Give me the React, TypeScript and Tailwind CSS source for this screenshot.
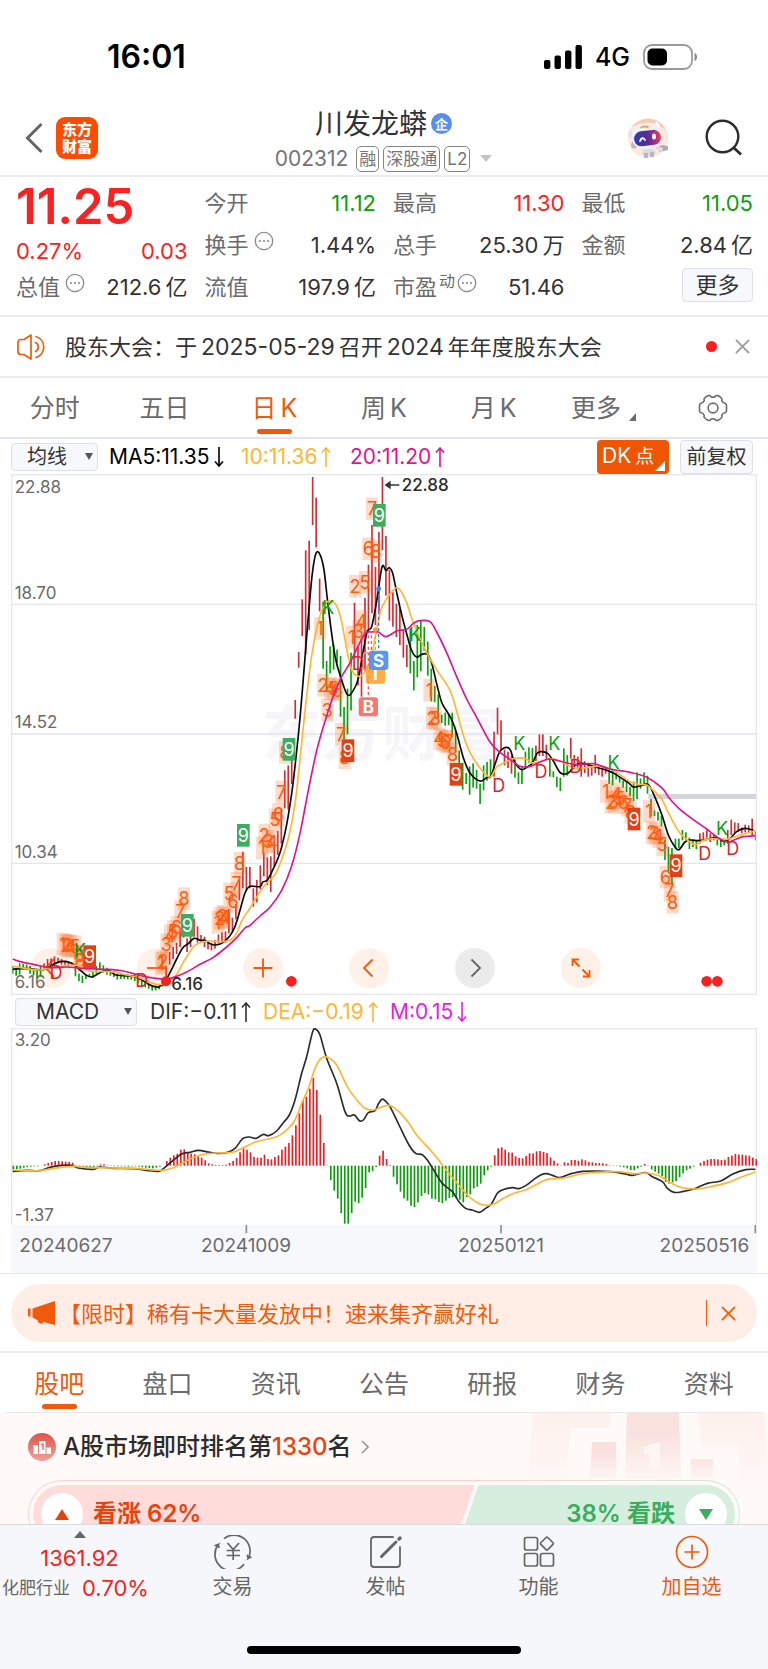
import React from "react";

type Point = [number, number];
type Range = [number, number];

const UP = "#cf3036";
const DOWN = "#0c9f0c";

/* Price rows are recorded on a 0..1524 scale and stretched to the plot height */
const rowY = (y: number) => Math.round(y * 1.0332);

const RUNS: { color: string; bars: Range[] }[] = [
  { color: DOWN, bars: [[1440, 1462], [1445, 1468], [1432, 1465], [1434, 1450], [1436, 1450], [1440, 1462], [1448, 1466], [1448, 1476], [1440, 1470]] },
  { color: UP, bars: [[1432, 1450], [1420, 1445], [1418, 1440], [1412, 1436], [1416, 1432], [1420, 1436], [1425, 1440], [1428, 1442], [1430, 1440]] },
  { color: DOWN, bars: [[1440, 1470], [1462, 1484], [1468, 1490], [1465, 1478], [1462, 1472], [1455, 1475], [1440, 1462], [1430, 1452], [1438, 1460], [1445, 1465], [1450, 1468], [1455, 1472], [1462, 1480], [1462, 1478], [1463, 1478], [1463, 1479], [1465, 1480], [1466, 1484], [1470, 1490], [1480, 1500], [1485, 1502], [1492, 1506], [1495, 1512], [1496, 1511], [1492, 1508], [1480, 1500]] },
  { color: UP, bars: [[1440, 1478], [1400, 1436], [1385, 1420], [1372, 1405], [1340, 1385], [1310, 1358], [1360, 1400], [1340, 1385], [1303, 1355], [1325, 1372], [1350, 1370], [1355, 1385], [1368, 1392], [1372, 1395], [1365, 1390], [1348, 1375], [1342, 1370], [1340, 1372], [1275, 1345], [1300, 1340], [1260, 1305], [1190, 1250], [1108, 1215], [1153, 1220], [1153, 1215], [1215, 1268], [1190, 1255], [1148, 1218], [1110, 1180], [1125, 1205], [1122, 1225], [1080, 1150], [1048, 1118], [985, 1085], [872, 982], [858, 985], [840, 912], [668, 722], [528, 574], [376, 482], [233, 535], [205, 465], [20, 160], [80, 225], [316, 410]] },
  { color: DOWN, bars: [[382, 577], [555, 645], [512, 590], [505, 580], [522, 560], [540, 716], [688, 782], [635, 768], [530, 698]] },
  { color: UP, bars: [[385, 545], [513, 625], [488, 658], [372, 585], [275, 470], [160, 415], [282, 450], [180, 410], [20, 232], [192, 365], [290, 437], [355, 455], [388, 485], [402, 508], [465, 545], [508, 572]] },
  { color: DOWN, bars: [[460, 590], [555, 640], [450, 602], [438, 585], [456, 525], [498, 597], [577, 672], [627, 675], [652, 720], [710, 735], [705, 742], [708, 740], [705, 775], [758, 820], [815, 880], [850, 928], [880, 912], [860, 943], [852, 922], [871, 925], [911, 970], [858, 930], [848, 902], [840, 890]] },
  { color: UP, bars: [[760, 890], [690, 768], [727, 812], [812, 858], [818, 865], [830, 882]] },
  { color: DOWN, bars: [[840, 893], [878, 912], [860, 912], [818, 865], [805, 850], [807, 850]] },
  { color: UP, bars: [[800, 845], [768, 830], [768, 830], [798, 840]] },
  { color: DOWN, bars: [[835, 890], [875, 892], [890, 920], [893, 932], [808, 890], [828, 888]] },
  { color: UP, bars: [[778, 838], [828, 868], [832, 870], [808, 890], [846, 880], [850, 890], [858, 888], [828, 880], [862, 886], [865, 890], [865, 882]] },
  { color: DOWN, bars: [[870, 912], [872, 916], [880, 898], [890, 908], [902, 922], [905, 935], [920, 948], [905, 962], [878, 955], [895, 925], [878, 918], [888, 940], [955, 1005], [988, 1005], [993, 1018], [1005, 1035], [1072, 1132], [1095, 1165], [1098, 1200], [1070, 1100], [1070, 1098], [1045, 1075], [1052, 1075], [1068, 1100], [1072, 1095], [1075, 1100]] },
  { color: UP, bars: [[1055, 1085], [1052, 1072], [1046, 1068], [1055, 1080], [1060, 1075]] },
  { color: DOWN, bars: [[1068, 1090], [1075, 1095], [1070, 1090]] },
  { color: UP, bars: [[1045, 1085], [1015, 1060], [1023, 1055], [1025, 1050], [1038, 1055], [1030, 1052], [1032, 1052], [1012, 1060], [1050, 1075]] },
];

const CANDLES = RUNS.flatMap((run) => run.bars.map(([top, bottom]) => ({ top: rowY(top), bottom: rowY(bottom), color: run.color })));
const CANDLE_STEP = 2229 / (CANDLES.length - 1);

const MA5: Point[] = [[38, 1450], [60, 1448], [90, 1448], [120, 1452], [140, 1448], [160, 1435], [180, 1428], [200, 1428], [222, 1436], [240, 1452], [258, 1466], [275, 1472], [295, 1462], [320, 1452], [345, 1465], [370, 1468], [400, 1470], [425, 1480], [445, 1492], [463, 1500], [478, 1500], [495, 1485], [510, 1460], [530, 1420], [548, 1388], [565, 1375], [582, 1360], [600, 1366], [615, 1366], [630, 1375], [645, 1379], [665, 1374], [690, 1352], [705, 1325], [718, 1285], [735, 1228], [750, 1209], [780, 1210], [788, 1196], [802, 1190], [820, 1158], [835, 1125], [845, 1095], [860, 1030], [875, 940], [885, 860], [900, 720], [915, 545], [925, 425], [937, 300], [948, 242], [960, 246], [972, 290], [985, 400], [1005, 540], [1025, 610], [1043, 653], [1060, 640], [1075, 605], [1090, 525], [1102, 468], [1115, 455], [1130, 380], [1146, 282], [1158, 292], [1168, 284], [1178, 300], [1190, 355], [1205, 420], [1220, 475], [1235, 525], [1250, 543], [1265, 535], [1283, 535], [1295, 560], [1310, 620], [1325, 675], [1340, 700], [1355, 725], [1370, 765], [1390, 835], [1410, 880], [1440, 903], [1462, 892], [1472, 890], [1485, 855], [1498, 820], [1510, 808], [1524, 806], [1532, 815], [1545, 850], [1565, 870], [1585, 860], [1598, 850], [1612, 822], [1628, 818], [1645, 825], [1660, 845], [1682, 880], [1705, 880], [1725, 858], [1750, 852], [1785, 862], [1815, 870], [1840, 880], [1865, 895], [1885, 908], [1900, 920], [1920, 918], [1945, 914], [1965, 950], [1985, 1000], [2005, 1060], [2025, 1095], [2037, 1102], [2055, 1080], [2070, 1074], [2100, 1076], [2130, 1070], [2150, 1068], [2172, 1078], [2190, 1070], [2210, 1050], [2235, 1040], [2260, 1046]];
const MA10: Point[] = [[38, 1440], [80, 1448], [120, 1452], [150, 1445], [200, 1438], [240, 1440], [270, 1456], [300, 1456], [340, 1458], [380, 1466], [420, 1475], [450, 1488], [475, 1494], [498, 1490], [525, 1472], [550, 1430], [580, 1385], [600, 1372], [630, 1368], [665, 1370], [690, 1365], [710, 1345], [725, 1310], [750, 1272], [770, 1240], [795, 1205], [825, 1175], [845, 1130], [865, 1070], [885, 970], [900, 840], [915, 700], [935, 540], [955, 440], [975, 390], [993, 380], [1010, 395], [1025, 440], [1040, 520], [1055, 580], [1072, 598], [1090, 592], [1110, 555], [1125, 490], [1140, 415], [1150, 390], [1170, 360], [1188, 343], [1202, 350], [1220, 385], [1235, 430], [1260, 490], [1280, 530], [1310, 580], [1350, 640], [1370, 700], [1390, 770], [1410, 820], [1440, 865], [1465, 890], [1475, 888], [1490, 862], [1510, 852], [1540, 838], [1575, 837], [1595, 850], [1620, 848], [1650, 838], [1680, 845], [1710, 860], [1740, 866], [1770, 862], [1800, 860], [1830, 868], [1860, 885], [1890, 905], [1915, 913], [1940, 915], [1960, 930], [1985, 955], [2005, 995], [2030, 1040], [2050, 1065], [2085, 1088], [2110, 1075], [2140, 1070], [2180, 1072], [2220, 1060], [2268, 1047]];
const MA20: Point[] = [[38, 1420], [60, 1428], [100, 1435], [150, 1445], [200, 1443], [250, 1447], [320, 1450], [370, 1455], [420, 1467], [460, 1475], [498, 1478], [530, 1470], [560, 1458], [600, 1435], [640, 1415], [680, 1385], [710, 1358], [735, 1330], [750, 1322], [780, 1295], [810, 1270], [845, 1220], [875, 1150], [900, 1055], [925, 930], [950, 815], [975, 730], [1000, 655], [1025, 600], [1050, 560], [1070, 520], [1095, 475], [1115, 470], [1135, 470], [1158, 484], [1190, 467], [1220, 463], [1240, 445], [1260, 437], [1290, 440], [1310, 470], [1340, 530], [1370, 600], [1400, 665], [1430, 718], [1470, 790], [1500, 820], [1530, 840], [1560, 860], [1590, 860], [1620, 848], [1650, 839], [1690, 848], [1730, 856], [1780, 853], [1830, 868], [1890, 878], [1940, 892], [1985, 922], [2010, 955], [2040, 985], [2080, 1015], [2120, 1042], [2150, 1065], [2180, 1080], [2200, 1075], [2230, 1065], [2268, 1062]];

type Mark = [string, number, number];

const COUNTS: Mark[] = [
  ["1", 188, 1376], ["2", 197, 1380], ["3", 204, 1380], ["4", 213, 1382], ["5", 225, 1384], ["6", 237, 1410], ["8", 240, 1424],
  ["1", 483, 1432], ["2", 488, 1428], ["3", 499, 1378], ["4", 510, 1352], ["5", 519, 1340], ["6", 530, 1328], ["7", 541, 1282], ["8", 552, 1245],
  ["1", 653, 1312], ["2", 659, 1302], ["3", 667, 1296], ["4", 675, 1300], ["5", 688, 1230], ["6", 699, 1252], ["7", 710, 1200], ["8", 719, 1142],
  ["1", 786, 1097], ["2", 793, 1060], ["3", 805, 1078], ["4", 816, 1080], ["5", 825, 1015], ["6", 835, 1000], ["7", 844, 935], ["8", 855, 820],
  ["1", 960, 460], ["2", 969, 625], ["3", 982, 697], ["4", 990, 635], ["5", 1000, 635], ["6", 1012, 640], ["7", 1023, 768], ["8", 1034, 835],
  ["1", 1055, 485], ["2", 1065, 338], ["3", 1075, 468], ["4", 1085, 440], ["5", 1095, 326], ["6", 1105, 228], ["7", 1116, 112], ["8", 1128, 236],
  ["1", 1288, 640], ["2", 1296, 720], ["3", 1306, 722], ["4", 1318, 780], ["5", 1327, 785], ["6", 1336, 790], ["7", 1346, 788], ["8", 1358, 825],
  ["1", 1818, 933], ["2", 1832, 965], ["3", 1841, 962], ["4", 1850, 942], ["5", 1860, 952], ["6", 1870, 966], ["7", 1882, 974], ["8", 1892, 995],
  ["1", 1947, 990], ["2", 1955, 1053], ["3", 1964, 1055], ["4", 1975, 1065], ["5", 1987, 1088], ["6", 1997, 1182], ["7", 2009, 1220], ["8", 2018, 1255],
];
const GREEN_NINES: Point[] = [[562, 1322], [730, 1061], [867, 811], [1138, 132]];
const RED_NINES: Point[] = [[269, 1413], [1044, 815], [1368, 884], [1902, 1013], [2028, 1149]];
const LETTERS: Mark[] = [
  ["K", 240, 1395], ["D", 168, 1458], ["D", 425, 1482], ["K", 985, 400], ["D", 1075, 560], ["K", 1245, 478], ["D", 1496, 917],
  ["K", 1558, 795], ["K", 1663, 795], ["K", 1841, 850], ["D", 1623, 875], ["D", 1728, 860], ["K", 2166, 1040], ["D", 2114, 1112], ["D", 2198, 1098],
];

/* MACD units: three per pixel, zero line at y 497 */
const HISTOGRAM = [-11, -10, -9, -6, -4, -3, -2, -2, 0, 4, 8, 11, 14, 14, 13, 12, 11, 9, -2, -4, -4, -5, -4, -4, -2, 4, 4, 1, -1, -2, -2, -2, -2, -3, -2, -2, -3, -5, -6, -7, -8, -6, -3, 0, 14, 24, 31, 36, 48, 49, 40, 36, 34, 28, 24, 16, 7, 4, 2, 2, 2, 3, 8, 14, 23, 40, 52, 48, 40, 26, 24, 24, 33, 20, 19, 26, 31, 48, 57, 68, 91, 121, 157, 197, 207, 231, 263, 227, 153, 68, -1, -43, -75, -99, -142, -174, -174, -142, -108, -112, -96, -67, -20, -16, -4, 30, 45, 20, 2, -33, -56, -78, -98, -105, -120, -124, -110, -91, -82, -86, -99, -101, -109, -112, -105, -97, -94, -98, -102, -110, -94, -86, -68, -63, -54, -29, -14, -3, 31, 52, 55, 48, 40, 39, 28, 23, 22, 29, 37, 37, 43, 44, 41, 38, 25, 15, 7, 1, 10, 8, 17, 17, 15, 19, 16, 11, 10, 8, 8, 7, 5, 1, -1, -1, -3, -5, -8, -13, -13, -8, -3, 5, -1, -11, -18, -24, -31, -49, -54, -50, -46, -35, -23, -14, -9, -3, 0, 9, 14, 18, 20, 20, 19, 17, 18, 26, 30, 35, 33, 33, 31, 30, 24, 20];
const HISTOGRAM_STEP = 2229 / (HISTOGRAM.length - 1);

const DIF: Point[] = [[38, 514], [80, 511], [120, 512], [150, 502], [185, 496], [215, 496], [235, 504], [280, 508], [300, 501], [340, 505], [400, 506], [440, 511], [475, 514], [490, 506], [515, 485], [545, 462], [570, 457], [595, 451], [625, 456], [650, 460], [680, 458], [705, 445], [728, 416], [748, 411], [768, 415], [790, 403], [806, 407], [830, 393], [850, 368], [868, 345], [885, 300], [905, 220], [920, 170], [938, 95], [948, 88], [960, 105], [980, 175], [1010, 250], [1035, 335], [1047, 348], [1063, 345], [1078, 362], [1090, 360], [1105, 338], [1125, 332], [1135, 312], [1146, 298], [1155, 302], [1170, 320], [1197, 375], [1227, 435], [1247, 460], [1267, 464], [1282, 480], [1302, 512], [1327, 550], [1357, 575], [1377, 605], [1397, 625], [1417, 630], [1439, 637], [1457, 625], [1474, 612], [1492, 580], [1507, 570], [1537, 563], [1557, 566], [1577, 557], [1602, 538], [1622, 525], [1639, 521], [1657, 526], [1677, 533], [1697, 527], [1717, 520], [1747, 514], [1792, 513], [1832, 515], [1872, 521], [1897, 526], [1937, 518], [1957, 530], [1987, 545], [2002, 565], [2022, 577], [2047, 575], [2082, 567], [2122, 550], [2162, 543], [2197, 523], [2237, 509], [2266, 508]];
const DEA: Point[] = [[38, 510], [120, 512], [160, 505], [220, 499], [260, 502], [330, 504], [400, 505], [450, 509], [490, 511], [520, 503], [545, 490], [575, 475], [610, 463], [650, 459], [700, 456], [735, 440], [770, 425], [830, 410], [860, 390], [885, 360], [905, 310], [925, 265], [945, 205], [960, 178], [975, 170], [990, 176], [1010, 195], [1045, 265], [1075, 305], [1095, 325], [1120, 330], [1150, 319], [1172, 317], [1197, 335], [1227, 370], [1252, 408], [1282, 440], [1312, 475], [1342, 515], [1372, 550], [1402, 585], [1432, 608], [1457, 616], [1482, 612], [1512, 594], [1542, 580], [1582, 568], [1612, 552], [1642, 538], [1692, 534], [1742, 522], [1792, 517], [1852, 515], [1902, 521], [1942, 519], [1977, 527], [2012, 548], [2042, 562], [2092, 567], [2132, 560], [2182, 548], [2222, 532], [2266, 516]];

/* Catmull-Rom curve through the points, as cubic segments */
function curve(points: Point[]): string {
  let d = `M${points[0][0]} ${points[0][1]}`;
  for (let i = 0; i < points.length - 1; i++) {
    const p0 = points[i - 1] ?? points[i];
    const p1 = points[i];
    const p2 = points[i + 1];
    const p3 = points[i + 2] ?? p2;
    const c1 = [p1[0] + (p2[0] - p0[0]) / 6, p1[1] + (p2[1] - p0[1]) / 6];
    const c2 = [p2[0] - (p3[0] - p1[0]) / 6, p2[1] - (p3[1] - p1[1]) / 6];
    d += `C${c1[0].toFixed(1)} ${c1[1].toFixed(1)} ${c2[0].toFixed(1)} ${c2[1].toFixed(1)} ${p2[0]} ${p2[1]}`;
  }
  return d;
}

const priceCurve = (points: Point[]) => curve(points.map(([x, y]): Point => [x, rowY(y)]));

/* Price labels with their baselines */
const PRICES: [string, number][] = [["22.88", 69], ["18.70", 386], ["14.52", 775], ["10.34", 1165], ["6.16", 1555]];

function PriceChart() {
  return (
    <svg viewBox="33 12 2238 1563" className="pointer-events-none relative block h-auto w-full" role="img" aria-label="日K走势图">
      <text x="1145" y="858" textAnchor="middle" fontSize="180" fontWeight="700" fill="#f6f6f8">东方财富</text>
      <path d="M33 403H2271M33 792H2271M33 1180H2271" stroke="#e3e5ec" strokeWidth="4" />
      <rect x="1945" y="972" width="326" height="15" fill="#d2d5da" />
      <g fill="#6b6b6b" fontSize="51">
        {PRICES.map(([text, y]) => <text key={text} x="44" y={y}>{text}</text>)}
      </g>
      {CANDLES.map((bar, i) => (
        <rect key={i} x={35.5 + i * CANDLE_STEP} y={bar.top} width="5" height={bar.bottom - bar.top} fill={bar.color} />
      ))}
      {COUNTS.map(([text, x, y], i) => (
        <g key={i}>
          <rect x={x - 18} y={rowY(y) - 34} width="36" height="68" fill="#ff6a26" fillOpacity="0.24" />
          <text x={x} y={rowY(y) + 20} textAnchor="middle" fontSize="54" fill="#ff5a0a">{text}</text>
        </g>
      ))}
      <g fill="none" strokeWidth="5" strokeLinejoin="round">
        <path d={priceCurve(MA5)} stroke="#0a0a0a" />
        <path d={priceCurve(MA10)} stroke="#ffb733" />
        <path d={priceCurve(MA20)} stroke="#e0148c" />
      </g>
      {LETTERS.map(([text, x, y], i) => (
        <text key={i} x={x} y={rowY(y) + 20} textAnchor="middle" fontSize="54" fill={text === "K" ? DOWN : "#d9262c"}>{text}</text>
      ))}
      {GREEN_NINES.map(([x, y]) => (
        <g key={x}>
          <rect x={x - 19} y={rowY(y) - 34} width="38" height="68" fill="#3aad5f" />
          <text x={x} y={rowY(y) + 20} textAnchor="middle" fontSize="54" fill="#fff">9</text>
        </g>
      ))}
      {RED_NINES.map(([x, y]) => (
        <g key={x}>
          <rect x={x - 19} y={rowY(y) - 34} width="38" height="68" fill="#e54014" />
          <text x={x} y={rowY(y) + 20} textAnchor="middle" fontSize="54" fill="#fff">9</text>
        </g>
      ))}
      <g strokeWidth="4" strokeDasharray="9 8" fill="none">
        <path d="M1136 356V542" stroke="#2f7df6" />
        <path d="M1126 480V584" stroke="#ff9a1f" />
        <path d="M1105 496V682" stroke="#f4565a" />
        <path d="M1114 496V542" stroke="#f4565a" />
      </g>
      <circle cx="1136" cy="356" r="7" fill="#2f7df6" />
      <circle cx="1126" cy="479" r="7" fill="#ff9a1f" />
      <rect x="1090" y="548" width="40" height="54" rx="8" fill="none" stroke="#f79a96" strokeWidth="4" />
      <g fontSize="51" fontWeight="700" fill="#fff" textAnchor="middle">
        <rect x="1097" y="584" width="58" height="57" rx="9" fill="#ffa233" fillOpacity="0.9" />
        <text x="1126" y="631">T</text>
        <rect x="1107" y="542" width="58" height="58" rx="9" fill="#5090f6" fillOpacity="0.95" />
        <text x="1136" y="590">S</text>
        <rect x="1076" y="682" width="58" height="57" rx="9" fill="#fa6f66" fillOpacity="0.95" />
        <text x="1105" y="730">B</text>
      </g>
      <path d="M1156 45h42M1170 36l-13 9 13 9z" stroke="#333" strokeWidth="4" fill="#333" />
      <g fill="#2c2c2c" fontSize="51" fontWeight="500">
        <text x="1205" y="64">22.88</text>
        <text x="514" y="1560">6.16</text>
      </g>
      <g fill="#f81f1f">
        <circle cx="498" cy="1534" r="15" />
        <circle cx="874" cy="1534" r="16" />
        <circle cx="2120" cy="1534" r="16" />
        <circle cx="2152" cy="1534" r="16" />
      </g>
      <rect x="35" y="14" width="2234" height="1559" fill="none" stroke="#e6e7eb" strokeWidth="4" />
    </svg>
  );
}

function MacdChart() {
  return (
    <svg viewBox="33 84 2238 735" className="block h-auto w-full" role="img" aria-label="MACD指标图">
      <rect x="33" y="675" width="2238" height="144" fill="#f7f8fb" />
      <path d="M35 675V86H2269V675" fill="none" stroke="#e6e7eb" strokeWidth="4" />
      <g fill="#6b6b6b" fontSize="51">
        <text x="44" y="137">3.20</text>
        <text x="44" y="662">-1.37</text>
      </g>
      {HISTOGRAM.map((v, i) => (
        <rect key={i} x={37.5 + i * HISTOGRAM_STEP} y={v > 0 ? 497 - v : 497} width="5" height={Math.abs(v)} fill={v > 0 ? "#f01c22" : "#0a9c0a"} />
      ))}
      <path d={curve(DIF)} fill="none" stroke="#2b2b2b" strokeWidth="5" />
      <path d={curve(DEA)} fill="none" stroke="#ffb733" strokeWidth="5" />
      <path d="M739 675v25M1503 675v25M2266 675v25" stroke="#8d8d92" strokeWidth="5" />
      <g fill="#6b6b6b" fontSize="57">
        <text x="58" y="757">20240627</text>
        <text x="738" y="757" textAnchor="middle">20241009</text>
        <text x="1503" y="757" textAnchor="middle">20250121</text>
        <text x="2248" y="757" textAnchor="end">20250516</text>
      </g>
    </svg>
  );
}

function MoreDots() {
  return (
    <svg viewBox="0 0 20 20" className="h-5 w-5 flex-none text-[#8c8c8c]" fill="none" stroke="currentColor" aria-hidden="true">
      <circle cx="10" cy="10" r="8.7" strokeWidth="1.3" />
      <g fill="currentColor" stroke="none">
        <circle cx="6" cy="10" r="1.1" />
        <circle cx="10" cy="10" r="1.1" />
        <circle cx="14" cy="10" r="1.1" />
      </g>
    </svg>
  );
}

function Stat({ label, value, unit, tone, info, sup }: { label: string; value: string; unit?: string; tone?: string; info?: boolean; sup?: string }) {
  return (
    <div className="flex h-[42px] items-center justify-between">
      <dt className="flex items-center text-[#6b6b6b]">
        {label}
        {(info || sup) && (
          <span className="mb-2 ml-[2px] flex items-center text-base leading-5">
            {sup && <span className="mb-1">{sup}</span>}
            {info && <span className={sup ? "ml-[2px]" : "ml-[3px]"}><MoreDots /></span>}
          </span>
        )}
      </dt>
      <dd className={tone ?? "text-[#333]"}>
        {value}
        {unit && <span className="ml-1">{unit}</span>}
      </dd>
    </div>
  );
}

function Cross({ className }: { className: string }) {
  return (
    <svg viewBox="0 0 16 16" className={className} fill="none" stroke="currentColor" strokeWidth="1.8" strokeLinecap="round" aria-hidden="true">
      <path d="M1.5 1.5l13 13M14.5 1.5l-13 13" />
    </svg>
  );
}

function Picker({ label, options, className }: { label: string; options: string[]; className: string }) {
  return (
    <span className="relative flex">
      <select aria-label={label} className={className}>
        {options.map((o) => <option key={o}>{o}</option>)}
      </select>
      <svg viewBox="0 0 8 7" className="pointer-events-none absolute top-[10px] right-[5px] h-[7px] w-2" fill="#555" aria-hidden="true">
        <path d="M0 0h8L4 7z" />
      </svg>
    </span>
  );
}

function StatusBar() {
  return (
    <div className="flex h-[100px] items-center justify-between pt-[14px] pr-[70px] pl-[107px] text-black">
      <span className="text-[32px] leading-9 font-semibold">16:01</span>
      <div className="flex items-center gap-[13px]">
        <svg viewBox="0 0 38 24" className="h-6 w-[38px]" aria-label="信号">
          <rect x="0" y="15" width="6.4" height="9" rx="2" />
          <rect x="10.5" y="10.5" width="6.4" height="13.5" rx="2" />
          <rect x="21" y="5.5" width="6.4" height="18.5" rx="2" />
          <rect x="31.5" y="0" width="6.4" height="24" rx="2" />
        </svg>
        <span className="text-[25px] leading-8 font-medium">4G</span>
        <svg viewBox="0 0 55 26" className="h-[26px] w-[55px]" aria-label="电池">
          <rect x="1" y="1" width="48" height="24" rx="8" fill="none" stroke="#9a9a9a" strokeWidth="1.8" />
          <rect x="4.5" y="4.5" width="19.5" height="17" rx="5" />
          <path d="M51.5 9c3.400 1 3.400 7 0 8z" fill="#8b8b8b" />
        </svg>
      </div>
    </div>
  );
}

function Robot() {
  return (
    <svg viewBox="0 0 42 42" className="h-[42px] w-[42px]" aria-hidden="true">
      <defs>
        <linearGradient id="visor" x1="0" x2="1" y1="0" y2="0">
          <stop offset="0" stopColor="#2b3fae" />
          <stop offset=".5" stopColor="#5a2a98" />
          <stop offset="1" stopColor="#ea3a55" />
        </linearGradient>
      </defs>
      <circle cx="21" cy="21" r="20" fill="#ffe9df" />
      <path d="M5 10a20 20 0 0 1 34 3c-6-6-24-8-34-3z" fill="#ffc7ae" />
      <path d="M16 32h11l2 5q-6 4-14 1z" fill="#dcdbe0" />
      <path d="M17 36h4v5h-4zM23 35h4v5h-4z" fill="#b9b6bd" />
      <path d="M29 31l6-3 6 1v4l-8 2z" fill="#aeadb4" />
      <path d="M30 29l6 2-1 4-5-2z" fill="#dddce1" />
      <ellipse cx="4" cy="17" rx="3" ry="4" fill="#e4e3e8" />
      <ellipse cx="7" cy="28" rx="3" ry="3.500" fill="#b9b8be" />
      <path d="M4.500 18C4.500 9 12 6 20 5.500s13 4 14.500 10c1.500 9-3 15-14 16.500S4.500 27 4.500 18z" fill="#f0eff3" />
      <path d="M27 6q5-4 6 5z" fill="#fff" />
      <path d="M13 10q4-2.500 9-1l-1 2q-4-1-7 .5z" fill="#f0a23c" />
      <rect x="7" y="13.500" width="27" height="15" rx="7.500" transform="rotate(-7 21 21)" fill="url(#visor)" />
      <path d="M13 24q2-5 5-1" fill="none" stroke="#fff" strokeWidth="1.800" strokeLinecap="round" />
      <ellipse cx="27" cy="19.500" rx="2" ry="3" fill="#fff" />
    </svg>
  );
}

function Header() {
  return (
    <header className="grid h-[77px] grid-cols-[1fr_auto_1fr] items-center border-b-2 border-[#ededed] pr-[26px] pl-[25px]">
      <div className="flex items-center gap-[13px]">
        <button aria-label="返回" className="flex">
          <svg viewBox="0 0 18 32" className="h-8 w-[18px]" fill="none" stroke="#666" strokeWidth="3">
            <path d="M16.500 2L2.500 16l14 14" />
          </svg>
        </button>
        <a href="#home" className="flex h-[42px] w-[42px] flex-col items-center justify-center rounded-[9px] bg-[#ff4b00] text-[15px] leading-[17px] font-black text-white">
          <span>东方</span>
          <span>财富</span>
        </a>
      </div>
      <div className="flex flex-col items-center pt-1">
        <div className="flex items-center gap-1">
          <h1 className="text-[28px] leading-[38px] text-[#333]">川发龙蟒</h1>
          <span className="flex h-[21px] w-[21px] items-center justify-center rounded-full bg-[#5b8def] text-[13px] leading-5 font-bold text-white">企</span>
        </div>
        <button className="flex items-center gap-1 text-[#757575]">
          <span className="mr-1 text-[21px] leading-8">002312</span>
          <span className="h-[26px] rounded-[5px] border border-[#858585] px-[2px] text-[17px] leading-6">融</span>
          <span className="h-[26px] rounded-[5px] border border-[#858585] px-[2px] text-[17px] leading-6">深股通</span>
          <span className="h-[26px] rounded-[5px] border border-[#858585] px-[2px] text-[17px] leading-6">L2</span>
          <svg viewBox="0 0 12 7" className="ml-[6px] h-[7px] w-3" fill="#c4c4c4" aria-hidden="true"><path d="M0 0h12L6 7z" /></svg>
        </button>
      </div>
      <div className="flex items-center justify-end gap-9">
        <button aria-label="智能助手"><Robot /></button>
        <button aria-label="搜索">
          <svg viewBox="0 0 37 37" className="h-[37px] w-[37px]" fill="none" stroke="#2c2c2c" strokeWidth="2.400">
            <circle cx="17.500" cy="17.500" r="15.800" />
            <path d="M28.500 28.500l7.500 7" strokeWidth="2.800" />
          </svg>
        </button>
      </div>
    </header>
  );
}

const RED = "text-[#f82222]";
const GREEN = "text-[#0ca00c]";

function Quote() {
  return (
    <section className="grid grid-cols-4 gap-x-[17px] border-b-2 border-[#ededed] pt-[5px] pr-[15px] pb-[7px] pl-4 text-[22px] leading-8">
      <div className="flex flex-col">
        <strong className="h-[53px] text-[49px] leading-[50px] font-semibold text-[#f82222]">11.25</strong>
        <p className="flex h-[31px] items-center justify-between text-[#f82222]">
          <span>0.27%</span>
          <span>0.03</span>
        </p>
        <dl><Stat label="总值" value="212.6" unit="亿" info /></dl>
      </div>
      <dl>
        <Stat label="今开" value="11.12" tone={GREEN} />
        <Stat label="换手" value="1.44%" info />
        <Stat label="流值" value="197.9" unit="亿" />
      </dl>
      <dl>
        <Stat label="最高" value="11.30" tone={RED} />
        <Stat label="总手" value="25.30" unit="万" />
        <Stat label="市盈" value="51.46" info sup="动" />
      </dl>
      <div>
        <dl>
          <Stat label="最低" value="11.05" tone={GREEN} />
          <Stat label="金额" value="2.84" unit="亿" />
        </dl>
        <div className="flex justify-end">
          <button className="mt-[2px] h-[34px] w-[71px] rounded border border-[#dddfe6] bg-[#f7f8fb] text-[#333]">更多</button>
        </div>
      </div>
    </section>
  );
}

function Notice() {
  return (
    <div className="flex h-[61px] items-center border-b-2 border-[#ededed] pr-[18px] pl-[17px]">
      <svg viewBox="0 0 30 26" className="h-[26px] w-[30px]" fill="none" stroke="#f05a0c" strokeWidth="1.700" strokeLinejoin="round" strokeLinecap="round" aria-hidden="true">
        <path d="M14 1L7 5.500H4Q1 5.500 1 8.500v9q0 3 3 3h3L14 25z" />
        <path d="M18.500 8.500a5 5 0 0 1 0 9" />
        <path d="M19 2.500a11 11 0 0 1 0 21" />
      </svg>
      <p className="ml-[18px] flex-1 text-[22px] leading-8 text-[#333]">
        股东大会：于<span className="mx-1 text-[23px]">2025-05-29</span>召开<span className="mx-1 text-[23px]">2024</span>年年度股东大会
      </p>
      <span className="h-[11px] w-[11px] rounded-full bg-[#f81f1f]" />
      <button aria-label="关闭公告" className="ml-[18px] flex text-[#999]"><Cross className="h-[15px] w-[15px]" /></button>
    </div>
  );
}

function PeriodTabs() {
  const tabs = ["分时", "五日", "日K", "周K", "月K", "更多"];
  return (
    <nav className="grid h-[61px] grid-cols-7 border-b-2 border-[#e3e4ec]">
      {tabs.map((tab, i) => (
        <button key={tab} className={i === 2 ? "relative flex items-center justify-center text-[25px] leading-8 text-[#f05a0c]" : "relative flex items-center justify-center text-[25px] leading-8 text-[#6b6b6b]"}>
          {i >= 2 && i <= 4 ? <span className="flex gap-1"><span>{tab[0]}</span><span>{tab[1]}</span></span> : tab}
          {i === 2 && <span className="absolute bottom-[3px] h-[5px] w-[35px] rounded-full bg-[#f05a0c]" />}
          {i === 5 && (
            <svg viewBox="0 0 7 8" className="mt-[18px] ml-2 h-2 w-[7px]" fill="#6b6b6b" aria-hidden="true"><path d="M7 0v8H0z" /></svg>
          )}
        </button>
      ))}
      <button aria-label="设置" className="flex items-center justify-center">
        <svg viewBox="0 0 30 28" className="h-7 w-[30px]" fill="none" stroke="#6b6b6b" strokeWidth="1.600" strokeLinejoin="round">
          <circle cx="15" cy="14" r="4.900" />
          <path d="M10.300 1.600Q12 1.200 12.800 2.500Q15 4 17.200 2.500Q18 1.200 19.700 1.600Q22.500 2.800 23.800 4.600Q24.200 5.900 23.700 6.600Q24.500 9 27 9.200Q28.200 9.800 28.500 11.200V16.800Q28.200 18.200 27 18.800Q24.500 19 23.700 21.400Q24.200 22.100 23.800 23.400Q22.500 25.200 19.700 26.400Q18 26.800 17.200 25.500Q15 24 12.800 25.500Q12 26.800 10.300 26.400Q7.500 25.200 6.200 23.400Q5.800 22.100 6.300 21.400Q5.500 19 3 18.800Q1.800 18.200 1.500 16.800V11.200Q1.800 9.800 3 9.200Q5.500 9 6.300 6.600Q5.800 5.900 6.200 4.600Q7.500 2.800 10.300 1.600Z" />
        </svg>
      </button>
    </nav>
  );
}

function Trend({ down }: { down?: boolean }) {
  return (
    <svg viewBox="0 0 10 20" className="ml-1 h-5 w-[10px]" fill="none" stroke="currentColor" strokeWidth="1.600" aria-hidden="true">
      {down ? <path d="M5 0v19M1 14.500l4 4.500 4-4.500" /> : <path d="M5 20V1M1 5.500L5 1l4 4.500" />}
    </svg>
  );
}

const ROUND = "flex h-10 w-10 items-center justify-center rounded-full bg-[#fff0e8] text-[#f05a0c]";

function ChartControls() {
  return (
    <div className="absolute bottom-[7px] left-5 flex gap-[66px]">
      <button aria-label="左移" className={ROUND}>
        <svg viewBox="0 0 20 20" className="h-5 w-5" fill="none" stroke="currentColor" strokeWidth="2"><path d="M13 1L5 10l8 9" /></svg>
      </button>
      <button aria-label="缩小" className={ROUND}>
        <svg viewBox="0 0 20 20" className="h-5 w-5" fill="none" stroke="currentColor" strokeWidth="1.800"><path d="M0 10h20" /></svg>
      </button>
      <button aria-label="放大" className={ROUND}>
        <svg viewBox="0 0 20 20" className="h-5 w-5" fill="none" stroke="currentColor" strokeWidth="1.800"><path d="M0.500 10h19M10 0.500v19" /></svg>
      </button>
      <button aria-label="上一段" className={ROUND}>
        <svg viewBox="0 0 20 20" className="h-5 w-5" fill="none" stroke="currentColor" strokeWidth="1.800"><path d="M13.500 1.500L5 10l8.500 8.500" /></svg>
      </button>
      <button aria-label="下一段" className="flex h-10 w-10 items-center justify-center rounded-full bg-[#ebebeb] text-[#666]">
        <svg viewBox="0 0 20 20" className="h-5 w-5" fill="none" stroke="currentColor" strokeWidth="1.800"><path d="M6.500 1.500L15 10l-8.500 8.500" /></svg>
      </button>
      <button aria-label="全屏" className={ROUND}>
        <svg viewBox="0 0 20 20" className="h-5 w-5" fill="none" stroke="currentColor" strokeWidth="1.800"><path d="M1.500 8V1.500H8M1.500 1.500l7 7M18.500 12v6.500H12M18.500 18.500l-7-7" /></svg>
      </button>
    </div>
  );
}

function Charts() {
  return (
    <section className="border-b border-[#e8e8ec] px-[11px]">
      <div className="flex h-[35px] items-center text-[21px] leading-7">
        <Picker label="主图指标" options={["均线", "BOLL"]} className="h-7 w-[87px] appearance-none rounded border border-[#dddfe6] bg-[#f7f8fb] pl-[15px] text-[20px] leading-6 text-[#333]" />
        <span className="ml-[11px] flex w-[132px] items-center whitespace-nowrap text-black">MA5:11.35<Trend down /></span>
        <span className="flex w-[109px] items-center whitespace-nowrap text-[#ffb733]">10:11.36<Trend /></span>
        <span className="flex items-center whitespace-nowrap text-[#e0148c]">20:11.20<Trend /></span>
        <button className="relative ml-auto h-[34px] w-[72px] rounded bg-[#ef5502] pl-[5px] text-left whitespace-nowrap text-white">
          DK<span className="ml-1 text-[19px]">点</span>
          <svg viewBox="0 0 10 10" className="absolute right-1 bottom-[3px] h-[10px] w-[10px]" fill="#fff" aria-hidden="true"><path d="M10 0v10H0z" /></svg>
        </button>
        <button className="mr-1 ml-[11px] h-[34px] w-[73px] rounded border border-[#dddfe6] bg-[#f7f8fb] text-[20px] text-[#333]">前复权</button>
      </div>
      <div className="relative">
        <ChartControls />
        <PriceChart />
      </div>
      <div className="flex h-[33px] items-center pl-1 text-[21px] leading-7">
        <Picker label="副图指标" options={["MACD", "KDJ", "RSI"]} className="h-7 w-[122px] appearance-none rounded border border-[#dddfe6] bg-[#f7f8fb] pl-5 text-[21px] leading-6 text-[#333]" />
        <span className="ml-[13px] flex w-[113px] items-center whitespace-nowrap text-[#333]">DIF:−0.11<Trend /></span>
        <span className="flex w-[127px] items-center whitespace-nowrap text-[#ffb733]">DEA:−0.19<Trend /></span>
        <span className="flex items-center whitespace-nowrap text-[#e421e4]">M:0.15<Trend down /></span>
      </div>
      <MacdChart />
    </section>
  );
}

function Promo() {
  return (
    <div className="border-b-2 border-[#ededed] px-[11px] pt-[10px] pb-[9px]">
      <div className="flex h-[58px] items-center rounded-[29px] bg-[#ffeee5] pr-[21px] pl-[17px] text-[#f05a0c]">
        <svg viewBox="0 0 27 24" className="h-6 w-[27px]" fill="currentColor" aria-hidden="true">
          <path d="M0 7.500h2.500v8H0zM4.500 7.500L27 0v24l-11.500-3q-.5 2-3 1.500Q9.500 21.500 9.500 19l-5-2.500z" />
        </svg>
        <p className="ml-1 flex-1 pt-px text-[22px] leading-8">【限时】稀有卡大量发放中！速来集齐赢好礼</p>
        <span className="h-[26px] w-px bg-[#f05a0c]" />
        <button aria-label="关闭活动" className="ml-[14px] flex"><Cross className="h-[15px] w-[15px]" /></button>
      </div>
    </div>
  );
}

function InfoTabs() {
  const tabs = ["股吧", "盘口", "资讯", "公告", "研报", "财务", "资料"];
  return (
    <nav className="mx-[5px] grid h-[60px] grid-cols-7 border-b border-[#e8e8e8] pt-[2px]">
      {tabs.map((tab, i) => (
        <a key={tab} href="#info" className={i === 0 ? "relative flex items-center justify-center text-[25px] leading-8 text-[#f05a0c]" : "relative flex items-center justify-center text-[25px] leading-8 text-[#6b6b6b]"}>
          {tab}
          {i === 0 && <span className="absolute bottom-[3px] h-[5px] w-[35px] rounded-full bg-[#f05a0c]" />}
        </a>
      ))}
    </nav>
  );
}

function Ranking() {
  return (
    <section className="relative h-[111px] overflow-hidden bg-[#fff9f7] px-7">
      <svg viewBox="0 0 240 71" className="absolute top-0 right-0 h-[71px] w-60" aria-hidden="true">
        <defs>
          <linearGradient id="podium" x1="0" x2="0" y1="0" y2="1">
            <stop offset="0.300" stopColor="#f9e1de" />
            <stop offset="1" stopColor="#fef6f4" />
          </linearGradient>
          <linearGradient id="podiumSide" x1="0" x2="0" y1="0" y2="1">
            <stop offset="0" stopColor="#fdf0ed" />
            <stop offset="1" stopColor="#fff8f6" />
          </linearGradient>
        </defs>
        <path d="M5 0h77v15H42L38 66H0zM170 0h66l4 70h-29V34h-37z" fill="url(#podiumSide)" />
        <path d="M99 0h52l2 66H97z" fill="url(#podium)" />
        <path d="M64 29h24v37H62zM163 46h22v20h-22z" fill="url(#podium)" />
        <path d="M116 34l16-5v26h-10V41h-6z" fill="#fff6f3" />
      </svg>
      <a href="#rank" className="relative flex h-[67px] items-center text-2xl font-medium text-[#2c2c2c]">
        <svg viewBox="0 0 28 28" className="h-7 w-7" aria-hidden="true">
          <defs>
            <linearGradient id="medal" x1="0" x2="0" y1="0" y2="1">
              <stop offset="0" stopColor="#de5149" />
              <stop offset="1" stopColor="#efa39c" />
            </linearGradient>
          </defs>
          <circle cx="14" cy="14" r="14" fill="url(#medal)" />
          <path d="M5.500 12H10v9H5.500zM11 8h6.500v13H11zM18.500 14.500H23V21h-4.500z" fill="#fff" />
          <path d="M13 12l2-1v6" fill="none" stroke="#d9645c" strokeWidth="1.300" />
        </svg>
        <span className="ml-[7px]">A股市场即时排名第<span className="text-[#e8430f]">1330</span>名</span>
        <svg viewBox="0 0 8 14" className="ml-[9px] h-[14px] w-2" fill="none" stroke="#999" strokeWidth="1.600" aria-hidden="true"><path d="M1 1l6 6-6 6" /></svg>
      </a>
      <div className="relative h-[68px] rounded-[34px] bg-gradient-to-r from-[#fbd3cf] from-60% to-[#cdebd5] p-px">
        <div className="h-[66px] rounded-[33px] bg-[#fffaf8] p-1">
          <div className="flex h-[58px] overflow-hidden rounded-[29px] text-2xl leading-8 font-semibold">
            <button className="flex flex-[63] items-center bg-[#fddcd9] pl-2 text-[#e8430f] [clip-path:polygon(0_0,100%_0,calc(100%-20px)_100%,0_100%)]">
              <span className="mr-[10px] flex h-[42px] w-[42px] items-center justify-center rounded-full bg-white">
                <svg viewBox="0 0 14 11" className="h-[11px] w-[14px]" fill="currentColor" aria-hidden="true"><path d="M7 0l7 11H0z" /></svg>
              </span>
              看涨 62%
            </button>
            <button className="-ml-4 flex flex-[39] items-center justify-end bg-[#d5eedd] pr-2 text-[#3aad5f] [clip-path:polygon(20px_0,100%_0,100%_100%,0_100%)]">
              38% 看跌
              <span className="ml-[10px] flex h-[42px] w-[42px] items-center justify-center rounded-full bg-white">
                <svg viewBox="0 0 14 11" className="h-[11px] w-[14px]" fill="currentColor" aria-hidden="true"><path d="M0 0h14L7 11z" /></svg>
              </span>
            </button>
          </div>
        </div>
      </div>
    </section>
  );
}

const ACTION = "flex flex-col items-center pt-[10px] text-[20px] leading-7 text-[#666]";

function BottomBar() {
  return (
    <footer className="flex h-[145px] flex-col justify-between border-t border-[#d5dae3] bg-[#f6f7fa] pb-[15px]">
      <nav className="grid grid-cols-5 pl-[3px]">
        <button className="flex flex-col items-center pt-[6px] text-[22px] leading-[30px] whitespace-nowrap text-[#f82222]">
          <svg viewBox="0 0 12 7" className="mb-[5px] h-[7px] w-3" fill="#666" aria-hidden="true"><path d="M6 0l6 7H0z" /></svg>
          <span>1361.92</span>
          <span className="flex items-center gap-3 pr-2"><span className="text-[17px] text-[#666]">化肥行业</span>0.70%</span>
        </button>
        <button className={ACTION}>
          <svg viewBox="0 0 40 34" className="mb-1 h-[34px] w-10" fill="none" stroke="currentColor" strokeWidth="1.700" aria-hidden="true">
            <path d="M11 3.600A16 16 0 0 1 35.200 23.500L38.500 21.800M35.200 23.500L34.200 19.800" />
            <path d="M31 29.300A16 16 0 0 1 5.300 9.500L1.500 10.800M5.300 9.500L6 13" />
            <path d="M14.500 8l5.700 6.500L26 8M20.200 14.500V25M13.500 15.500h13.500M13.500 20.500h13.500" />
          </svg>
          交易
        </button>
        <button className={ACTION}>
          <svg viewBox="0 0 34 34" className="mb-1 h-[34px] w-[34px]" fill="none" stroke="currentColor" strokeWidth="1.800" strokeLinecap="round" aria-hidden="true">
            <path d="M24 2H5Q2 2 2 5v24q0 3 3 3h23q3 0 3-3V12" />
            <path d="M12.500 21.500L27 7" strokeWidth="3" />
            <path d="M30 4l1-1" strokeWidth="3.500" />
          </svg>
          发帖
        </button>
        <button className={ACTION}>
          <svg viewBox="0 0 34 34" className="mb-1 h-[34px] w-[34px]" fill="none" stroke="currentColor" strokeWidth="1.700" aria-hidden="true">
            <rect x="2.500" y="2.500" width="13" height="12.500" rx="2" />
            <rect x="2.500" y="18.500" width="13" height="12.500" rx="2" />
            <rect x="18.500" y="18.500" width="13" height="12.500" rx="2" />
            <rect x="20" y="3.700" width="9.800" height="9.800" rx="1.200" transform="rotate(45 24.900 8.600)" />
          </svg>
          功能
        </button>
        <button className="flex flex-col items-center pt-[10px] text-[20px] leading-7 text-[#f05a0c]">
          <svg viewBox="0 0 34 34" className="mb-1 h-[34px] w-[34px]" fill="none" stroke="currentColor" strokeWidth="1.700" aria-hidden="true">
            <circle cx="17" cy="17" r="15.500" />
            <path d="M9.500 17h15M17 9.500v15" />
          </svg>
          加自选
        </button>
      </nav>
      <div className="mx-auto h-2 w-[274px] rounded-full bg-black" />
    </footer>
  );
}

export default function App() {
  return (
    <main className="min-h-screen bg-white font-['Inter','Noto_Sans_CJK_SC',sans-serif]">
      <StatusBar />
      <Header />
      <Quote />
      <Notice />
      <PeriodTabs />
      <Charts />
      <Promo />
      <InfoTabs />
      <Ranking />
      <BottomBar />
    </main>
  );
}
